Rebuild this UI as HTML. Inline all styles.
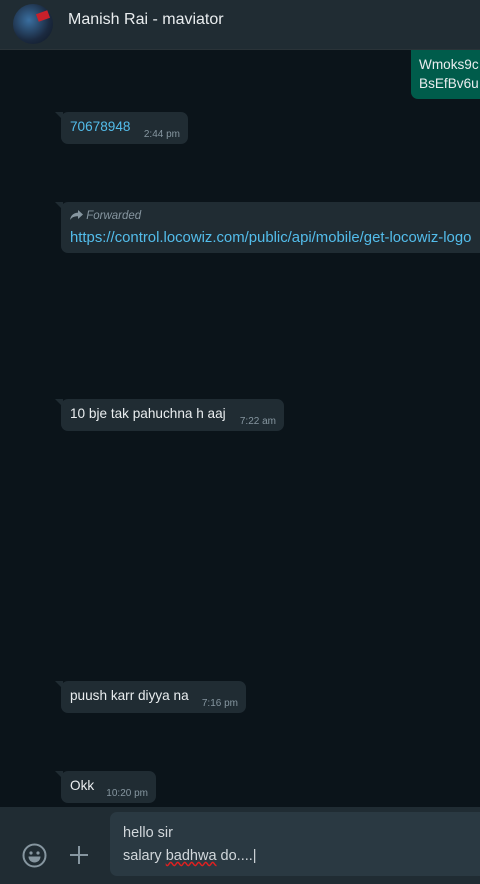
<!DOCTYPE html>
<html><head><style>
*{margin:0;padding:0;box-sizing:border-box}
body{width:480px;height:884px;overflow:hidden;background:#0b141a;font-family:"Liberation Sans","DejaVu Sans",sans-serif;position:relative;color:#e9edef}
.hdr{position:absolute;left:0;top:0;width:480px;height:50px;background:#202c33;border-bottom:1px solid #2a3338}
.av{position:absolute;left:13px;top:4px;width:40px;height:40px;border-radius:50%;background:radial-gradient(circle at 40% 40%,#3a6fa0,#1b2a40 60%,#0d1520);overflow:hidden}
.av:after{content:"";position:absolute;right:4px;top:8px;width:12px;height:8px;background:#c8202a;transform:rotate(-20deg)}
.name{position:absolute;left:68px;top:11px;font-size:16px;color:#e9edef}
.b{position:absolute;background:#202c33;border-radius:7px;font-size:13.6px;padding:0 9px;height:32px;line-height:30px}
.b:before{content:"";position:absolute;left:-6px;top:0;border-top:8px solid #202c33;border-left:8px solid transparent}
.t{font-size:10px;color:#8696a0;position:absolute;right:8px;bottom:3px;line-height:12px}
.out{position:absolute;left:411px;top:50px;width:80px;height:49px;background:#005c4b;border-radius:0 0 0 7px;font-size:13.6px;padding:5px 8px;line-height:19px;white-space:nowrap;overflow:hidden}
.ftr{position:absolute;left:0;top:807px;width:480px;height:77px;background:#202c33}
.inp{position:absolute;left:110px;top:5px;width:380px;height:64px;background:#2a3942;border-radius:7px;padding:10px 13px;font-size:14.5px;line-height:23px;color:#d1d7db}
</style></head><body>
<div class="hdr"><div class="av"></div><div class="name">Manish Rai - maviator</div></div>
<div class="out">Wmoks9c<br>BsEfBv6u</div>
<div class="b" style="left:61px;top:112px;width:127px"><span style="color:#53bdeb">70678948</span><span class="t">2:44 pm</span></div>
<div class="b" style="left:61px;top:202px;width:430px;height:51px;line-height:16px;padding-top:6px">
<div style="font-size:11.5px;font-style:italic;color:#8696a0"><svg width="13" height="10" viewBox="0 0 13 10" style="vertical-align:-1px"><path d="M8 0l5 4.5L8 9V6.3C4 6.3 1.8 7.5 0 10 .6 6 2.8 3 8 2.6z" fill="#8696a0"/></svg> Forwarded</div>
<div style="color:#53bdeb;font-size:14.9px;margin-top:6px;white-space:nowrap">https://control.locowiz.com/public/api/mobile/get-locowiz-logo</div></div>
<div class="b" style="left:61px;top:399px;width:223px">10 bje tak pahuchna h aaj<span class="t">7:22 am</span></div>
<div class="b" style="left:61px;top:681px;width:185px">puush karr diyya na<span class="t">7:16 pm</span></div>
<div class="b" style="left:61px;top:771px;width:95px">Okk<span class="t">10:20 pm</span></div>
<div class="ftr">
<svg style="position:absolute;left:22px;top:36px" width="25" height="25" viewBox="0 0 25 25"><circle cx="12.5" cy="12.5" r="11" fill="none" stroke="#8696a0" stroke-width="2"/><circle cx="9" cy="10" r="1.6" fill="#8696a0"/><circle cx="16" cy="10" r="1.6" fill="#8696a0"/><path d="M6.5 13.5h12c0 3.5-2.7 6-6 6s-6-2.5-6-6z" fill="#8696a0"/></svg>
<svg style="position:absolute;left:69px;top:38px" width="20" height="20" viewBox="0 0 20 20"><path d="M10 1v18M1 10h18" stroke="#8696a0" stroke-width="2"/></svg>
<div class="inp">hello sir<br>salary <span style="text-decoration:underline wavy #e02020">badhwa</span> do....|</div>
</div>
</body></html>
